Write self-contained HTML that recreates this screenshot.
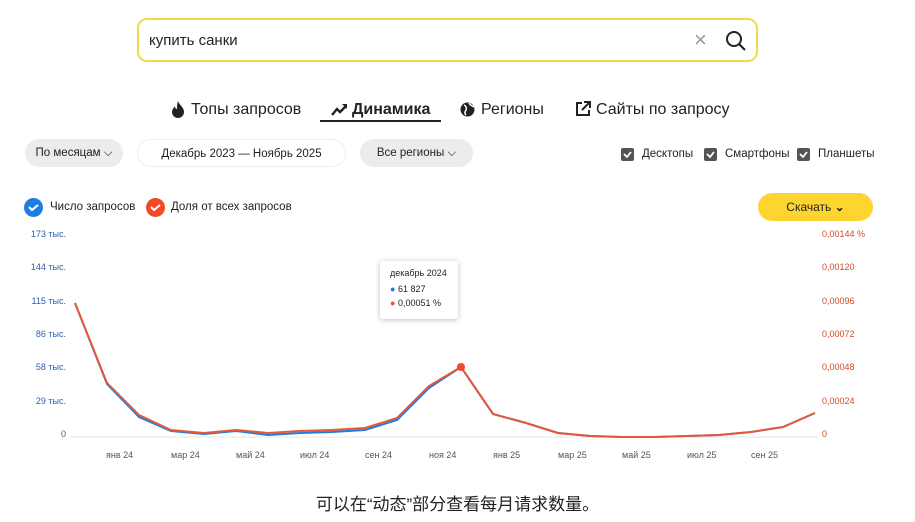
<!DOCTYPE html>
<html><head><meta charset="utf-8"><style>
body{margin:0;width:915px;height:522px;background:#fff;font-family:"Liberation Sans","Noto Sans CJK SC",sans-serif;position:relative;overflow:hidden;color:#222}
.a{position:absolute}
.search{left:137px;top:18px;width:621px;height:44px;border:2px solid #f5d94a;border-radius:10px;box-sizing:border-box}
.tab{top:101px;font-size:16px;color:#222}
.pill{top:139px;height:28px;border-radius:14px;background:#ececec;font-size:11.5px;line-height:28px;text-align:center}
.cbl{top:148px;font-size:11.5px}
.yl{font-size:9px;color:#3060b0;width:40px;text-align:right;left:26px}
.yr{font-size:9px;color:#d44a2a;left:822px}
.xl{font-size:9px;color:#555;top:450px}
</style></head><body>
<div class="a search"><span class="a" style="left:10px;top:12px;font-size:15px">купить санки</span>
<span class="a" style="left:555px;top:7px;font-size:22px;color:#999">×</span>
<svg class="a" style="left:586px;top:10px" width="22" height="22"><circle cx="9" cy="9" r="7" fill="none" stroke="#222" stroke-width="2"/><line x1="14" y1="14" x2="20" y2="20" stroke="#222" stroke-width="2.2"/></svg></div>
<svg class="a" style="left:171px;top:101px" width="14" height="17"><path d="M7 0C8 4 13 6 13 11a6 6 0 0 1-12 0c0-3 2-4 3-6 0 2 1 3 2 3C6 5 6 3 7 0z" fill="#222"/></svg>
<div class="a tab" style="left:191px">Топы запросов</div>
<svg class="a" style="left:331px;top:103px" width="17" height="13"><path d="M1 12L6 6l3 3 6-6" fill="none" stroke="#222" stroke-width="2.4"/><path d="M11 1h5v5z" fill="#222"/></svg>
<div class="a tab" style="left:352px;font-weight:bold">Динамика</div>
<div class="a" style="left:320px;top:120px;width:121px;height:1.5px;background:#222"></div>
<svg class="a" style="left:460px;top:102px" width="15" height="15"><circle cx="7.5" cy="7.5" r="7" fill="#222"/><path d="M4 3c2 1 3 3 2 5s-2 3 0 5M9 1c1 2 3 3 5 4" fill="none" stroke="#fff" stroke-width="1.5"/></svg>
<div class="a tab" style="left:481px">Регионы</div>
<svg class="a" style="left:575px;top:101px" width="16" height="16"><path d="M7 2H2v12h12V9" fill="none" stroke="#222" stroke-width="2"/><path d="M7 9l7-7M9 1h6v6" fill="none" stroke="#222" stroke-width="2"/></svg>
<div class="a tab" style="left:596px">Сайты по запросу</div>
<div class="a pill" style="left:25px;width:98px">По месяцам ⌵</div>
<div class="a pill" style="left:137px;width:209px;background:#fff;border:1px solid #eee;box-sizing:border-box">Декабрь 2023 — Ноябрь 2025</div>
<div class="a pill" style="left:360px;width:113px">Все регионы ⌵</div>
<svg class="a" style="left:0;top:0" width="915" height="240">
<g fill="#555"><rect x="621" y="148" width="13" height="13" rx="2"/><rect x="704" y="148" width="13" height="13" rx="2"/><rect x="797" y="148" width="13" height="13" rx="2"/></g>
<g fill="none" stroke="#fff" stroke-width="1.8"><path d="M624 154l3 3 4-5M707 154l3 3 4-5M800 154l3 3 4-5"/></g>
<circle cx="33.5" cy="207.5" r="9.5" fill="#1e7ee0"/><circle cx="155.5" cy="207.5" r="9.5" fill="#f04a2a"/>
<g fill="none" stroke="#fff" stroke-width="2"><path d="M29 207l3 3 6-5M151 207l3 3 6-5"/></g>
</svg>
<div class="a cbl" style="left:642px">Десктопы</div>
<div class="a cbl" style="left:725px">Смартфоны</div>
<div class="a cbl" style="left:818px">Планшеты</div>
<div class="a" style="left:50px;top:201px;font-size:11.5px">Число запросов</div>
<div class="a" style="left:171px;top:201px;font-size:11.5px">Доля от всех запросов</div>
<div class="a" style="left:758px;top:193px;width:115px;height:28px;border-radius:14px;background:#fdd430;font-size:12px;line-height:28px;text-align:center">Скачать <b>⌄</b></div>
<div class="a yl" style="top:229px">173 тыс.</div><div class="a yl" style="top:262px">144 тыс.</div><div class="a yl" style="top:296px">115 тыс.</div><div class="a yl" style="top:329px">86 тыс.</div><div class="a yl" style="top:362px">58 тыс.</div><div class="a yl" style="top:396px">29 тыс.</div><div class="a yl" style="top:429px">0</div>
<div class="a yr" style="top:229px">0,00144 %</div><div class="a yr" style="top:262px">0,00120</div><div class="a yr" style="top:296px">0,00096</div><div class="a yr" style="top:329px">0,00072</div><div class="a yr" style="top:362px">0,00048</div><div class="a yr" style="top:396px">0,00024</div><div class="a yr" style="top:429px">0</div>
<div class="a xl" style="left:106px">янв 24</div><div class="a xl" style="left:171px">мар 24</div><div class="a xl" style="left:236px">май 24</div><div class="a xl" style="left:300px">июл 24</div><div class="a xl" style="left:365px">сен 24</div><div class="a xl" style="left:429px">ноя 24</div><div class="a xl" style="left:493px">янв 25</div><div class="a xl" style="left:558px">мар 25</div><div class="a xl" style="left:622px">май 25</div><div class="a xl" style="left:687px">июл 25</div><div class="a xl" style="left:751px">сен 25</div>
<svg class="a" style="left:0;top:0" width="915" height="522">
<line x1="70" y1="437" x2="818" y2="437" stroke="#e6e6e6"/>
<polyline fill="none" stroke="#1e7ee0" stroke-width="2" points="75,303 107,384 139,417 171,431 204,434 236,431 268,435 300,433 332,432 365,430 397,420 429,388 461,367 493,414 526,423 558,433 590,436 622,437 655,437 687,436 719,435 751,432 783,427 815,413"/>
<polyline fill="none" stroke="#e8563a" stroke-width="2" points="75,303 107,383 139,415 171,430 204,433 236,430 268,433 300,431 332,430 365,428 397,418 429,386 461,367 493,414 526,423 558,433 590,436 622,437 655,437 687,436 719,435 751,432 783,427 815,413"/>
<circle cx="461" cy="367" r="4" fill="#f04a2a"/>
</svg>
<div class="a" style="left:380px;top:261px;width:78px;height:58px;background:#fff;box-shadow:0 1px 6px rgba(0,0,0,.25);border-radius:3px;font-size:9px">
<div class="a" style="left:10px;top:7px">декабрь 2024</div>
<div class="a" style="left:10px;top:23px"><span style="color:#1e7ee0">●</span> 61 827</div>
<div class="a" style="left:10px;top:37px"><span style="color:#f04a2a">●</span> 0,00051 %</div></div>
<div class="a" style="left:0;width:915px;top:490px;text-align:center;font-size:17px">可以在“动态”部分查看每月请求数量。</div>
</body></html>
